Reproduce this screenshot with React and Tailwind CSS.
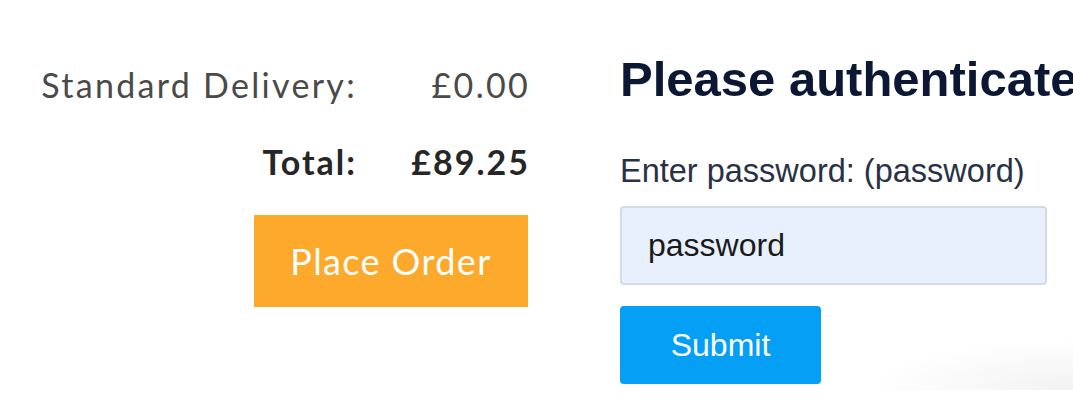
import React from 'react';

const OrderSummary = () => {
  return (
    <section className="w-[528px] shrink-0 flex flex-col items-end pt-[68px] font-['Lato',sans-serif]">
      <div className="flex items-start -mr-[2px] text-[34px] leading-[34px] tracking-[2.3px] text-[#4a4a4a]">
        <span>Standard Delivery:</span>
        <span className="w-[173px] text-right">£0.00</span>
      </div>
      <div className="flex items-start -mr-[2px] mt-[43px] text-[34px] leading-[34px] tracking-[2px] font-bold text-[#262626]">
        <span>Total:</span>
        <span className="w-[173px] text-right">£89.25</span>
      </div>
      <button className="mt-[36px] w-[274px] h-[92px] bg-[#fda92c] text-white text-[36px] tracking-[1.4px]">
        Place Order
      </button>
    </section>
  );
};

const AuthForm = () => {
  return (
    <section className="ml-[92px] pt-[55px] font-['Liberation_Sans',Arial,sans-serif] whitespace-nowrap">
      <h1 className="text-[49px] leading-[49px] font-bold text-[#0c1833]">Please authenticate</h1>
      <label className="block mt-[51px] text-[32.5px] leading-[32px] text-[#283247]">
        Enter password: (password)
      </label>
      <input
        type="text"
        defaultValue="password"
        className="block mt-[19px] w-[427px] h-[79px] px-[26px] bg-[#e8f0fe] border-2 border-[#d3dbe6] rounded-[4px] text-[32px] text-[#1a1a1a] outline-none"
      />
      <button className="block mt-[21px] w-[201px] h-[78px] rounded-[4px] bg-[#069ff6] text-white text-[32px]">
        Submit
      </button>
    </section>
  );
};

export default function App() {
  return (
    <div className="relative w-[1073px] h-[401px] overflow-hidden bg-white flex">
      <OrderSummary />
      <AuthForm />
      <div className="absolute left-[880px] top-[340px] w-[193px] h-[50px] bg-[radial-gradient(ellipse_at_100%_100%,rgba(0,0,0,0.05),transparent_75%)]" />
    </div>
  );
}
